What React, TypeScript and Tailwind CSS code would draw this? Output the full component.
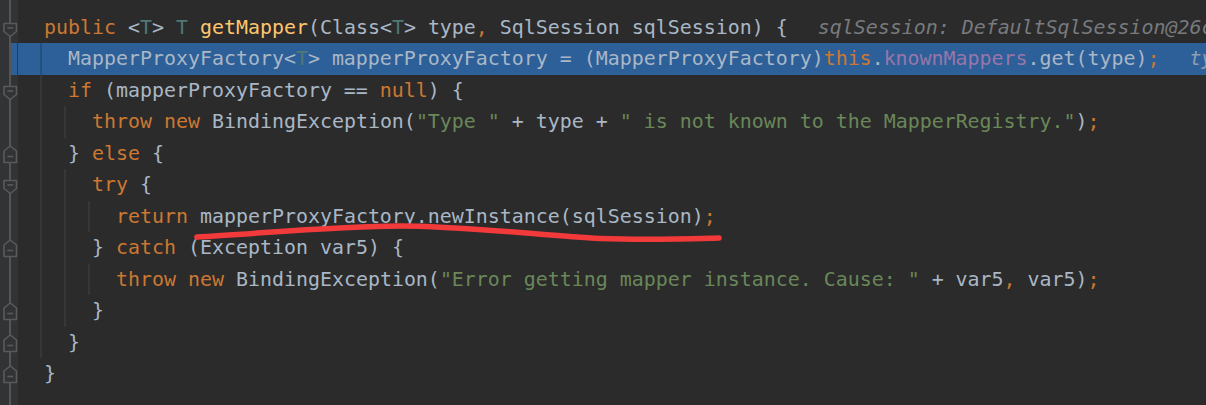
import React from "react";

type Tok = [string, string];
type Line = {
  level: number;
  toks: Tok[];
  marker?: "start" | "end";
  hl?: boolean;
  hint?: string;
};

const K = "text-[#cc7832]";
const D = "text-[#a9b7c6]";
const T = "text-[#507874]";
const F = "text-[#ffc66d]";
const S = "text-[#6a8759]";
const P = "text-[#9876aa]";

const lines: Line[] = [
  {
    level: 0,
    marker: "start",
    toks: [
      [K, "public"],
      [D, " <"],
      [T, "T"],
      [D, "> "],
      [T, "T"],
      [D, " "],
      [F, "getMapper"],
      [D, "(Class<"],
      [T, "T"],
      [D, "> type"],
      [K, ","],
      [D, " SqlSession sqlSession) {"],
    ],
    hint: "sqlSession: DefaultSqlSession@26c8",
  },
  {
    level: 1,
    hl: true,
    toks: [
      [D, "MapperProxyFactory<"],
      [T, "T"],
      [D, "> mapperProxyFactory = (MapperProxyFactory)"],
      [K, "this"],
      [D, "."],
      [P, "knownMappers"],
      [D, ".get(type)"],
      [K, ";"],
    ],
    hint: "type: ",
  },
  {
    level: 1,
    marker: "start",
    toks: [
      [K, "if"],
      [D, " (mapperProxyFactory == "],
      [K, "null"],
      [D, ") {"],
    ],
  },
  {
    level: 2,
    toks: [
      [K, "throw"],
      [D, " "],
      [K, "new"],
      [D, " BindingException("],
      [S, '"Type "'],
      [D, " + type + "],
      [S, '" is not known to the MapperRegistry."'],
      [D, ")"],
      [K, ";"],
    ],
  },
  {
    level: 1,
    marker: "end",
    toks: [
      [D, "} "],
      [K, "else"],
      [D, " {"],
    ],
  },
  {
    level: 2,
    marker: "start",
    toks: [
      [K, "try"],
      [D, " {"],
    ],
  },
  {
    level: 3,
    toks: [
      [K, "return"],
      [D, " mapperProxyFactory.newInstance(sqlSession)"],
      [K, ";"],
    ],
  },
  {
    level: 2,
    marker: "end",
    toks: [
      [D, "} "],
      [K, "catch"],
      [D, " (Exception var5) {"],
    ],
  },
  {
    level: 3,
    toks: [
      [K, "throw"],
      [D, " "],
      [K, "new"],
      [D, " BindingException("],
      [S, '"Error getting mapper instance. Cause: "'],
      [D, " + var5"],
      [K, ","],
      [D, " var5)"],
      [K, ";"],
    ],
  },
  { level: 2, marker: "end", toks: [[D, "}"]] },
  { level: 1, marker: "end", toks: [[D, "}"]] },
  { level: 0, marker: "end", toks: [[D, "}"]] },
];

function Marker({ kind }: { kind: "start" | "end" }) {
  const d =
    kind === "start"
      ? "M4 11.5 H16.5 V19.5 L10.25 24.5 L4 19.5 Z"
      : "M4 24.5 H16.5 V13 L10.25 8 L4 13 Z";
  const my = kind === "start" ? 16 : 18.5;
  return (
    <svg width="18" height="31.5" viewBox="0 0 18 31.5" className="block">
      <path d={d} fill="#313335" stroke="#5a5a5a" strokeWidth="1.6" strokeLinejoin="round" />
      <line x1="7.3" y1={my} x2="13.2" y2={my} stroke="#5a5a5a" strokeWidth="1.6" />
    </svg>
  );
}

function Gutter({ marker, hl }: { marker?: "start" | "end"; hl?: boolean }) {
  return (
    <div
      className={
        hl
          ? "w-[18px] shrink-0 self-stretch bg-[linear-gradient(to_right,#313335_9px,#555555_9px,#555555_11px,#2d5f98_11px,#2d5f98_17px,#1f3d63_17px)]"
          : "w-[18px] shrink-0 self-stretch bg-[linear-gradient(to_right,#313335_9px,#555555_9px,#555555_11px,#313335_11px)]"
      }
    >
      {marker && <Marker kind={marker} />}
    </div>
  );
}

function Row({ line }: { line: Line }) {
  const guides = [];
  for (let k = 0; k < line.level; k++) {
    guides.push(
      <div
        key={k}
        className={
          line.hl
            ? "w-[24px] h-full shrink-0 border-l-2 border-[#24507f]"
            : "w-[24px] h-full shrink-0 border-l-2 border-[#373737]"
        }
      />
    );
  }
  return (
    <div className={line.hl ? "flex h-[31.5px] bg-[#2d5f98]" : "flex h-[31.5px]"}>
      <Gutter marker={line.marker} hl={line.hl} />
      <div className="flex h-full pl-[22px]">
        {guides}
        <div className="pl-[4px] whitespace-pre">
          {line.toks.map(([c, t], i) => (
            <span key={i} className={c}>
              {t}
            </span>
          ))}
          {line.hint && (
            <span
              className={
                line.hl
                  ? "ml-[30px] italic text-[#8e9db2]"
                  : "ml-[30px] italic text-[#787a7e]"
              }
            >
              {line.hint}
            </span>
          )}
        </div>
      </div>
    </div>
  );
}

export default function App() {
  return (
    <div className="relative w-[1206px] h-[405px] overflow-hidden bg-[#2b2b2b] [font-family:'DejaVu_Sans_Mono',monospace] text-[19.93px] leading-[31.5px]">
      <div className="flex flex-col h-full">
        <div className="flex h-[11.5px] shrink-0">
          <Gutter />
        </div>
        {lines.map((l, i) => (
          <Row key={i} line={l} />
        ))}
        <div className="flex flex-1">
          <Gutter />
        </div>
      </div>
      <svg
        className="absolute left-0 top-0 pointer-events-none"
        width="1206"
        height="405"
        viewBox="0 0 1206 405"
      >
        <path
          d="M197 237 C 260 233.5, 340 226, 400 226 C 460 226, 540 235, 600 238.5 C 650 240.5, 700 238.5, 719 238"
          fill="none"
          stroke="#f23a3a"
          strokeWidth="5.5"
          strokeLinecap="round"
        />
      </svg>
    </div>
  );
}
